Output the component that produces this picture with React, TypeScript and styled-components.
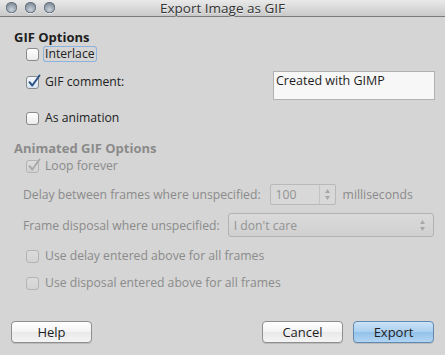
import React from 'react';
import styled, { createGlobalStyle } from 'styled-components';

const GlobalStyle = createGlobalStyle`
  html, body {
    margin: 0;
    padding: 0;
    background: #d5d5d5;
  }
  body {
    font-family: 'Open Sans', 'DejaVu Sans', sans-serif;
    font-size: 12.2px;
    color: #1e1e1e;
  }
`;

const Window = styled.div`
  width: 445px;
  height: 355px;
  display: flex;
  flex-direction: column;
  background: #d5d5d5;
  overflow: hidden;
`;

const TitleBar = styled.div`
  position: relative;
  height: 16px;
  display: flex;
  align-items: center;
  justify-content: center;
  background: linear-gradient(#e9e9e9, #c9c9c9);
  border-bottom: 1px solid #7b7b7b;
`;

const Lights = styled.div`
  position: absolute;
  left: 6px;
  top: 2px;
  display: flex;
  gap: 8px;
`;

const Light = styled.span`
  width: 11px;
  height: 11px;
  border-radius: 50%;
  background: radial-gradient(circle at 50% 70%, #c9d3dc 0%, #8e9aa6 55%, #5f6b77 100%);
  box-shadow: inset 0 0 0 0.5px #55606b, 0 1px 0 rgba(255, 255, 255, 0.5);
`;

const Title = styled.span`
  font-size: 13.5px;
  color: #333;
  line-height: 16px;
  text-shadow: 0 1px 0 rgba(255, 255, 255, 0.6);
`;

const Body = styled.div`
  flex: 1;
  display: flex;
  flex-direction: column;
  padding: 12px 12px 0 14px;
`;

const SectionTitle = styled.div<{ $disabled?: boolean; $gap: number }>`
  height: 16px;
  line-height: 16px;
  margin-top: ${(p) => p.$gap}px;
  font-weight: bold;
  font-size: 13px;
  color: ${(p) => (p.$disabled ? '#8b8b8b' : '#1e1e1e')};
`;

const CheckRow = styled.div<{ $gap: number }>`
  display: flex;
  align-items: center;
  height: 14px;
  margin-top: ${(p) => p.$gap}px;
  padding-left: 12px;
`;

const CommentRow = styled.div`
  display: flex;
  align-items: flex-start;
  justify-content: space-between;
  height: 29px;
  margin-top: 10px;
  padding-left: 12px;
`;

const CommentCheck = styled.div`
  display: flex;
  align-items: center;
  height: 14px;
  margin-top: 4px;
`;

const Box = styled.span<{ $disabled?: boolean; $checked?: boolean }>`
  position: relative;
  width: 11px;
  height: 11px;
  border-radius: 3px;
  border: 1px solid ${(p) => (p.$disabled ? '#b4b4b4' : '#8a8a8a')};
  background: ${(p) =>
    p.$disabled
      ? 'linear-gradient(#dcdcdc, #d2d2d2)'
      : p.$checked
        ? 'linear-gradient(#f4f8fc, #d9e6f2)'
        : 'linear-gradient(#ffffff, #ececec)'};
  flex-shrink: 0;
`;

const Tick = styled.svg`
  position: absolute;
  left: 0;
  top: -3px;
  width: 14px;
  height: 14px;
`;

const Label = styled.span<{ $disabled?: boolean; $focus?: boolean }>`
  margin-left: 5px;
  padding: 0 1px;
  line-height: 14px;
  border-radius: 2px;
  color: ${(p) => (p.$disabled ? '#8b8b8b' : '#222')};
  box-shadow: ${(p) => (p.$focus ? '0 0 0 1px #8bb3dc' : 'none')};
`;

const CommentField = styled.div`
  width: 156px;
  height: 27px;
  border: 1px solid #b1b1b1;
  background: #f7f7f7;
  padding: 0 2px;
  line-height: 17px;
  font-size: 12.5px;
  box-sizing: content-box;
  margin-right: -2px;
`;

const FieldRow = styled.div<{ $gap: number; $height: number }>`
  display: flex;
  align-items: center;
  height: ${(p) => p.$height}px;
  margin-top: ${(p) => p.$gap}px;
  padding-left: 9px;
  color: #8b8b8b;
`;

const Spin = styled.div`
  display: flex;
  height: 19px;
  width: 64px;
  margin-left: 9px;
  border: 1px solid #b9b9b9;
  border-radius: 2px;
  background: #d8d8d8;
`;

const SpinValue = styled.span`
  flex: 1;
  padding-left: 5px;
  line-height: 19px;
  color: #939393;
`;

const SpinArrows = styled.span`
  width: 15px;
  border-left: 1px solid #c4c4c4;
  display: flex;
  align-items: center;
  justify-content: center;
`;

const Unit = styled.span`
  margin-left: 7px;
`;

const Combo = styled.div`
  flex: 1;
  display: flex;
  align-items: center;
  justify-content: space-between;
  height: 22px;
  margin-left: 8px;
  margin-right: -1px;
  padding: 0 7px 0 5px;
  border: 1px solid #b2b2b2;
  border-radius: 3px;
  background: linear-gradient(#dadada, #d0d0d0);
  color: #939393;
`;

const Footer = styled.div`
  display: flex;
  align-items: center;
  gap: 10px;
  padding: 0 11px 12px 11px;
`;

const Spacer = styled.div`
  flex: 1;
`;

const Button = styled.button<{ $primary?: boolean }>`
  width: 81px;
  height: 22px;
  padding: 0;
  border-radius: 4px;
  font-family: inherit;
  font-size: 13px;
  color: #1e1e1e;
  border: 1px solid ${(p) => (p.$primary ? '#6089b2' : '#8e8e8e')};
  background: ${(p) =>
    p.$primary
      ? 'linear-gradient(#cde3f6 0%, #a9cff0 50%, #93c1e9 51%, #b2d5f3 100%)'
      : 'linear-gradient(#ffffff 0%, #f3f3f3 50%, #e9e9e9 51%, #f4f4f4 100%)'};
  box-shadow: 0 1px 0 rgba(0, 0, 0, 0.12);
`;

const Arrows = ({ color }: { color: string }) => (
  <svg width="7" height="13" viewBox="0 0 7 13">
    <path d="M3.5 1 L6 5 H1 Z" fill={color} />
    <path d="M3.5 12 L6 8 H1 Z" fill={color} />
  </svg>
);

type CheckProps = {
  label: string;
  checked?: boolean;
  disabled?: boolean;
  focus?: boolean;
};

const Check = ({ label, checked, disabled, focus }: CheckProps) => (
  <>
    <Box $disabled={disabled} $checked={checked}>
      {checked && (
        <Tick viewBox="0 0 14 14">
          <path
            d="M2.5 8.2 L5.3 11.5 L12.5 1.5"
            fill="none"
            stroke={disabled ? '#a9a9a9' : '#2b5286'}
            strokeWidth="2"
            strokeLinecap="round"
            strokeLinejoin="round"
          />
        </Tick>
      )}
    </Box>
    <Label $disabled={disabled} $focus={focus}>
      {label}
    </Label>
  </>
);

export default function App() {
  return (
    <Window>
      <GlobalStyle />
      <TitleBar>
        <Lights>
          <Light />
          <Light />
          <Light />
        </Lights>
        <Title>Export Image as GIF</Title>
      </TitleBar>
      <Body>
        <SectionTitle $gap={0}>GIF Options</SectionTitle>
        <CheckRow $gap={2}>
          <Check label="Interlace" focus />
        </CheckRow>
        <CommentRow>
          <CommentCheck>
            <Check label="GIF comment:" checked />
          </CommentCheck>
          <CommentField>Created with GIMP</CommentField>
        </CommentRow>
        <CheckRow $gap={11}>
          <Check label="As animation" />
        </CheckRow>

        <SectionTitle $gap={15} $disabled>
          Animated GIF Options
        </SectionTitle>
        <CheckRow $gap={3}>
          <Check label="Loop forever" checked disabled />
        </CheckRow>
        <FieldRow $gap={11} $height={21}>
          Delay between frames where unspecified:
          <Spin>
            <SpinValue>100</SpinValue>
            <SpinArrows>
              <Arrows color="#a8a8a8" />
            </SpinArrows>
          </Spin>
          <Unit>milliseconds</Unit>
        </FieldRow>
        <FieldRow $gap={8} $height={24}>
          Frame disposal where unspecified:
          <Combo>
            <span>I don't care</span>
            <Arrows color="#a8a8a8" />
          </Combo>
        </FieldRow>
        <CheckRow $gap={12}>
          <Check label="Use delay entered above for all frames" disabled />
        </CheckRow>
        <CheckRow $gap={13}>
          <Check label="Use disposal entered above for all frames" disabled />
        </CheckRow>
      </Body>
      <Footer>
        <Button>Help</Button>
        <Spacer />
        <Button>Cancel</Button>
        <Button $primary>Export</Button>
      </Footer>
    </Window>
  );
}
